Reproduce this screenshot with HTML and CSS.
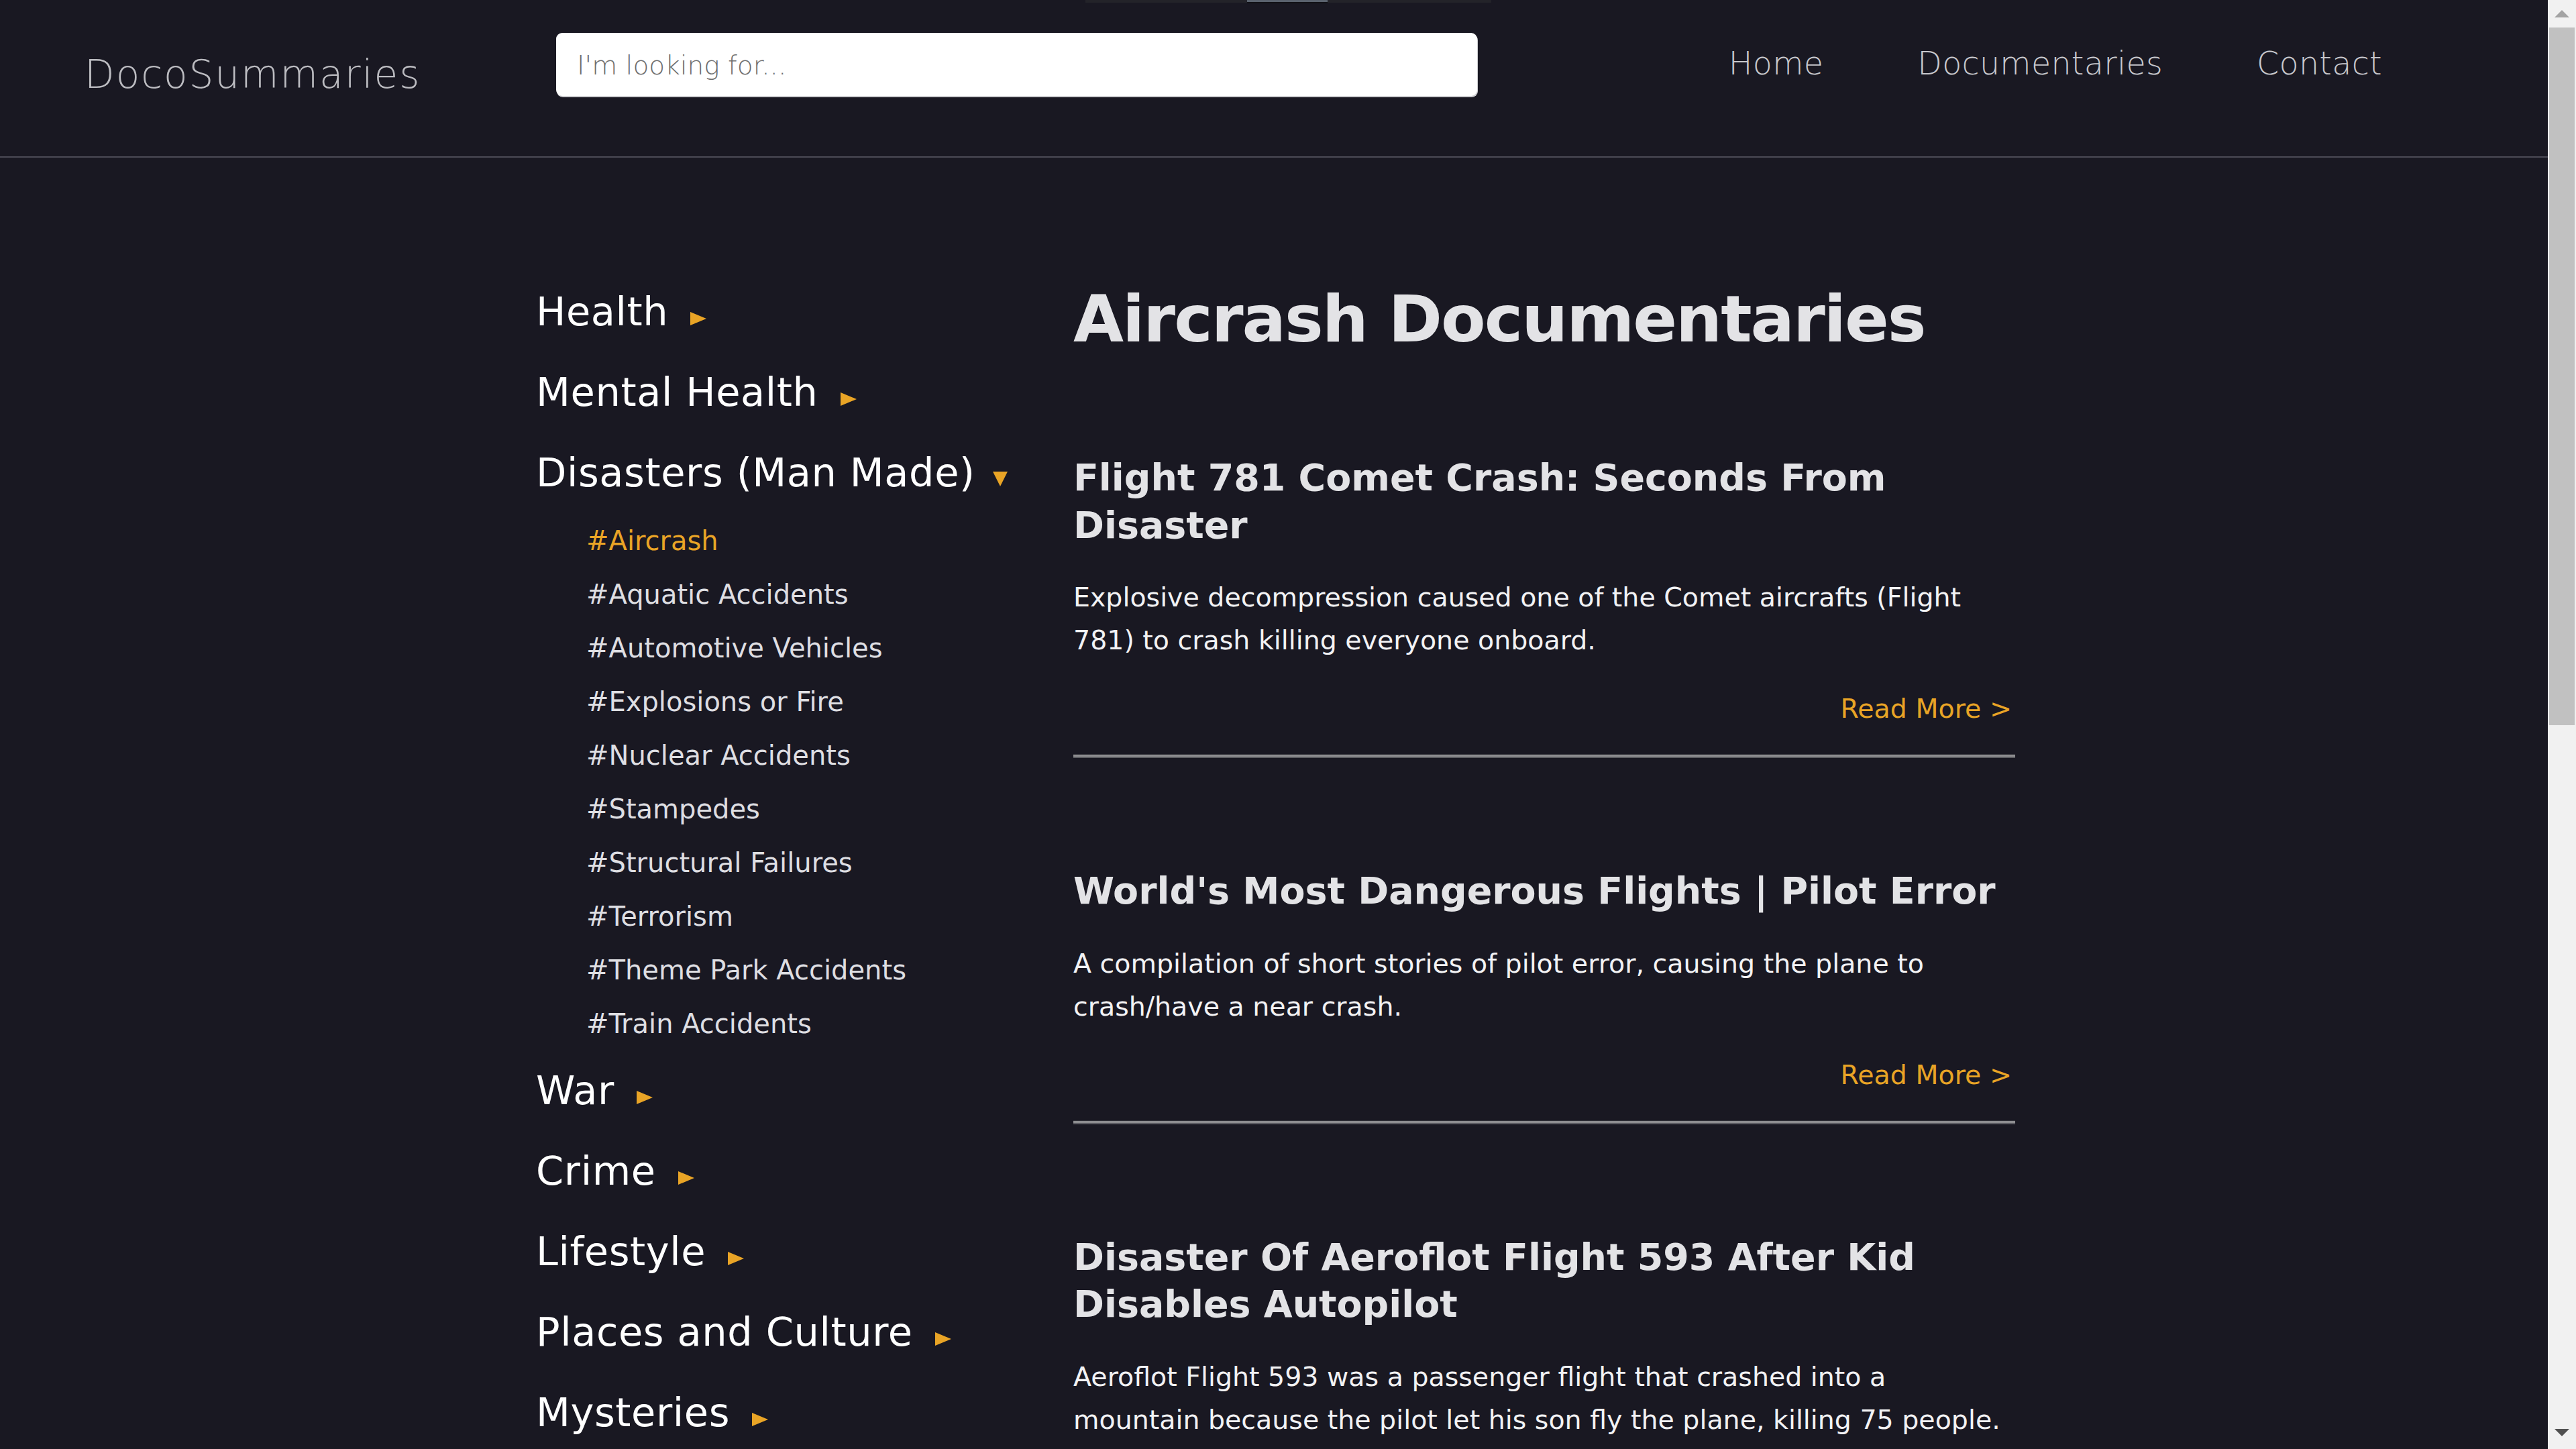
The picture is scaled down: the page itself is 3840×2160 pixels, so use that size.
FILE: index.html
```html
<!DOCTYPE html>
<html lang="en">
<head>
<meta charset="utf-8">
<title>DocoSummaries – Aircrash Documentaries</title>
<link rel="stylesheet" href="styles.css">
</head>
<body>
<div class="viewport">
  <div class="page">
    <div class="ghost-menu"><span class="ghost-tab"></span></div>
    <header class="topbar">
      <div class="brand">DocoSummaries</div>
      <input class="search" type="text" placeholder="I'm looking for...">
      <nav class="nav">
        <a class="nav-link">Home</a>
        <a class="nav-link">Documentaries</a>
        <a class="nav-link">Contact</a>
      </nav>
    </header>
    <main class="layout">
      <aside class="sidebar">
        <ul class="cats">
          <li class="cat"><div class="cat-row">Health<span class="tri tri-right"></span></div></li>
          <li class="cat"><div class="cat-row">Mental Health<span class="tri tri-right"></span></div></li>
          <li class="cat"><div class="cat-row">Disasters (Man Made)<span class="tri tri-down"></span></div>
            <ul class="subs">
              <li class="sub active">#Aircrash</li>
              <li class="sub">#Aquatic Accidents</li>
              <li class="sub">#Automotive Vehicles</li>
              <li class="sub">#Explosions or Fire</li>
              <li class="sub">#Nuclear Accidents</li>
              <li class="sub">#Stampedes</li>
              <li class="sub">#Structural Failures</li>
              <li class="sub">#Terrorism</li>
              <li class="sub">#Theme Park Accidents</li>
              <li class="sub">#Train Accidents</li>
            </ul>
          </li>
          <li class="cat"><div class="cat-row">War<span class="tri tri-right"></span></div></li>
          <li class="cat"><div class="cat-row">Crime<span class="tri tri-right"></span></div></li>
          <li class="cat"><div class="cat-row">Lifestyle<span class="tri tri-right"></span></div></li>
          <li class="cat"><div class="cat-row">Places and Culture<span class="tri tri-right"></span></div></li>
          <li class="cat"><div class="cat-row">Mysteries<span class="tri tri-right"></span></div></li>
        </ul>
      </aside>
      <section class="content">
        <h1 class="page-title">Aircrash Documentaries</h1>
        <article class="doc">
          <h2 class="doc-title">Flight 781 Comet Crash: Seconds From Disaster</h2>
          <p class="doc-text">Explosive decompression caused one of the Comet aircrafts (Flight 781) to crash killing everyone onboard.</p>
          <div class="doc-more"><a class="more-link">Read More &gt;</a></div>
          <div class="rule"></div>
        </article>
        <article class="doc">
          <h2 class="doc-title">World's Most Dangerous Flights | Pilot Error</h2>
          <p class="doc-text">A compilation of short stories of pilot error, causing the plane to crash/have a near crash.</p>
          <div class="doc-more"><a class="more-link">Read More &gt;</a></div>
          <div class="rule"></div>
        </article>
        <article class="doc">
          <h2 class="doc-title">Disaster Of Aeroflot Flight 593 After Kid Disables Autopilot</h2>
          <p class="doc-text">Aeroflot Flight 593 was a passenger flight that crashed into a mountain because the pilot let his son fly the plane, killing 75 people.</p>
          <div class="doc-more"><a class="more-link">Read More &gt;</a></div>
          <div class="rule"></div>
        </article>
      </section>
    </main>
  </div>
  <div class="scrollbar">
    <div class="sb-btn"><span class="sb-up"></span></div>
    <div class="sb-thumb"></div>
    <div class="sb-fill"></div>
    <div class="sb-btn sb-btn-bottom"><span class="sb-down"></span></div>
  </div>
</div>
</body>
</html>
```
FILE: styles.css
```css
* { box-sizing: border-box; }
html, body { margin: 0; padding: 0; }
body {
  background: #191822;
  font-family: "DejaVu Sans", Inter, sans-serif;
  overflow: hidden;
}
.viewport { display: flex; height: 2160px; }
.page { flex: 1; position: relative; overflow: hidden; background: #191822; }

/* faint dropdown remnant at the very top */
.ghost-menu {
  position: absolute; top: 0; left: 1618px;
  width: 605px; height: 4px;
  background: #232329;
}
.ghost-tab {
  position: absolute; top: 0; left: 241px;
  width: 120px; height: 3px;
  background: #5a626e;
  box-shadow: 0 2px 0 #121217;
}

/* header */
.topbar {
  display: flex;
  align-items: flex-start;
  height: 235px;
  border-bottom: 2px solid #4b4a55;
}
.brand {
  flex: 0 0 829px;
  padding-left: 126px;
  margin-top: 77px;
  font-size: 58px;
  line-height: 68px;
  font-weight: 200;
  letter-spacing: 2px;
  color: #bcbcc1;
}
.search {
  margin-top: 49px;
  width: 1373px;
  height: 94px;
  border: none;
  border-radius: 9px;
  padding: 3px 31px 0;
  font-family: "DejaVu Sans", Inter, sans-serif;
  font-size: 39px;
  font-weight: 200;
  color: #333;
  background: #fff;
  box-shadow: 1px 2px 0 #cfcfd2;
}
.search::placeholder { color: #6e6e6e; }
.nav {
  margin-left: auto;
  padding-right: 247px;
  margin-top: 68px;
  display: flex;
  gap: 140px;
}
.nav-link {
  font-size: 47.5px;
  line-height: 54px;
  font-weight: 200;
  letter-spacing: 0.3px;
  color: #c8c8cd;
}

/* main layout */
.layout {
  width: 2210px;
  margin: 0 auto;
  display: grid;
  grid-template-columns: 806px 1404px;
  padding-top: 170px;
}
.cats, .subs { list-style: none; margin: 0; padding: 0; }
.cat-row {
  font-size: 59px;
  line-height: 120px;
  letter-spacing: 0.6px;
  color: #ffffff;
  padding-left: 5px;
  white-space: nowrap;
}
.tri {
  display: inline-block;
  width: 0; height: 0;
  margin-left: 33px;
}
.tri-right {
  border-left: 24px solid #e9a426;
  border-top: 10.5px solid transparent;
  border-bottom: 10.5px solid transparent;
}
.tri-down {
  margin-left: 26px;
  border-top: 22px solid #e9a426;
  border-left: 11.5px solid transparent;
  border-right: 11.5px solid transparent;
}
.subs { padding-left: 80px; margin-top: 1px; }
.sub {
  font-size: 40px;
  line-height: 80px;
  color: #dedee2;
  white-space: nowrap;
}
.sub.active { color: #e9a426; }

.content { padding-top: 10px; }
.page-title {
  margin: 0 0 140px;
  font-size: 97px;
  line-height: 122px;
  font-weight: 700;
  letter-spacing: -2px;
  color: #e3e3e6;
}
.doc + .doc { margin-top: 163px; }
.doc-title {
  margin: 0;
  font-size: 55.4px;
  line-height: 70.5px;
  font-weight: 700;
  color: #e3e3e6;
}
.doc-text {
  margin: 40px 0 0;
  max-width: 1400px;
  font-size: 39.5px;
  line-height: 64px;
  color: #f2f2f4;
}
.doc-more {
  margin-top: 38px;
  text-align: right;
  font-size: 39.5px;
  line-height: 64px;
  padding-right: 5px;
}
.more-link { color: #e9a426; }
.rule {
  margin-top: 36px;
  height: 6px;
  background: #8d8d90;
  border-top: 1px solid #2f2f36;
  border-bottom: 2px solid #5d5d63;
}

/* scrollbar */
.scrollbar {
  flex: 0 0 42px;
  background: #f1f1f1;
  display: flex;
  flex-direction: column;
  align-items: center;
}
.sb-btn {
  height: 41px;
  width: 100%;
  display: flex;
  justify-content: center;
  align-items: center;
}
.sb-up {
  width: 0; height: 0;
  border-bottom: 11px solid #a3a3a3;
  border-left: 11px solid transparent;
  border-right: 11px solid transparent;
}
.sb-down {
  width: 0; height: 0;
  border-top: 11px solid #505050;
  border-left: 11px solid transparent;
  border-right: 11px solid transparent;
}
.sb-btn-bottom { height: 41px; align-items: flex-start; padding-top: 11px; }
.sb-thumb {
  width: 38px;
  height: 1040px;
  background: #c1c1c1;
}
.sb-fill { flex: 1; }
```
